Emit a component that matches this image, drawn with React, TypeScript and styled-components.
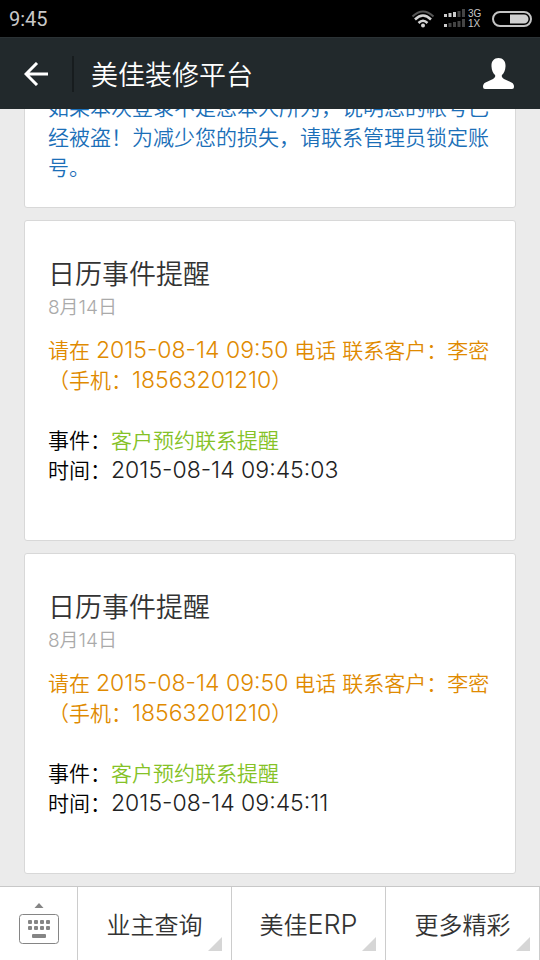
import React from "react";
import styled, { createGlobalStyle } from "styled-components";

const GlobalStyle = createGlobalStyle`
  *, *::before, *::after { box-sizing: border-box; }
  body {
    margin: 0;
    background: #ebebeb;
    font-family: Inter, "Noto Sans CJK SC", sans-serif;
    font-weight: 350;
  }
  button {
    margin: 0;
    padding: 0;
    border: 0;
    background: none;
    color: inherit;
    font: inherit;
    cursor: pointer;
  }
  h1, h2, p { margin: 0; font-weight: inherit; }
  svg { display: block; }
`;

const Screen = styled.div`
  display: flex;
  flex-direction: column;
  height: 100vh;
  overflow: hidden;
`;

const StatusBar = styled.div`
  flex: none;
  display: flex;
  align-items: center;
  height: 37px;
  padding: 0 8px 0 9px;
  background: #000;
  color: #c8c8c8;
`;

const Clock = styled.time`
  flex: 1;
  font-family: Roboto, sans-serif;
  font-size: 20px;
  font-weight: 400;
  line-height: 24px;
`;

const StatusIcons = styled.div`
  display: flex;
  align-items: center;
  gap: 9px;
`;

const Signal = styled.div`
  display: flex;
  align-items: center;
  gap: 3px;
`;

const Networks = styled.div`
  display: flex;
  flex-direction: column;
  width: 15px;
  font-family: "Liberation Sans", sans-serif;
  font-size: 10px;
  font-weight: 400;
  line-height: 10px;
`;

const Header = styled.header`
  flex: none;
  display: flex;
  align-items: center;
  height: 72px;
  padding-right: 26px;
  background: #22292c;
  border-top: 1px solid #2b3235;
  color: #fff;
`;

const BackButton = styled.button`
  display: flex;
  align-items: center;
  justify-content: center;
  width: 72px;
  height: 100%;
`;

const HeaderRule = styled.span`
  width: 2px;
  height: 36px;
  background: #171c1e;
`;

const HeaderTitle = styled.h1`
  flex: 1;
  padding: 4px 0 0 17px;
  font-size: 27px;
  line-height: 36px;
`;

const Messages = styled.main`
  flex: 1;
  min-height: 0;
  display: flex;
  flex-direction: column;
  justify-content: flex-end;
  gap: 12px;
  padding: 0 24px 12px;
  overflow: hidden;
`;

const Card = styled.article`
  flex: none;
  padding: 36px 23px 24px;
  background: #fff;
  border: 1px solid #d8d8d8;
  border-radius: 3px;
`;

const CardTitle = styled.h2`
  color: #333;
  font-size: 27px;
  line-height: 36px;
`;

const CardDate = styled.time`
  display: block;
  margin: 5px 0 18px;
  color: #aaa;
  font-size: 19px;
  line-height: 20px;
`;

const Line = styled.p<{ $color?: string }>`
  min-height: 30px;
  color: ${({ $color }) => $color ?? "#000"};
  font-size: 21px;
  line-height: 30px;
`;

const Value = styled.span<{ $color: string }>`
  color: ${({ $color }) => $color};
`;

const Figures = styled.span<{ $color?: string }>`
  color: ${({ $color }) => $color ?? "inherit"};
  font-size: 23px;
  line-height: 1;
`;

const Menu = styled.nav`
  flex: none;
  display: flex;
  height: 74px;
  background: #fff;
  border-top: 1px solid #c8c8c8;
`;

const KeyboardButton = styled.button`
  flex: none;
  display: flex;
  justify-content: center;
  width: 78px;
  padding-top: 16px;
  border-right: 1px solid #ccc;
`;

const MenuButton = styled.button`
  position: relative;
  flex: 1;
  padding-top: 4px;
  border-right: 1px solid #ccc;
  color: #333;
  font-size: 24px;
  line-height: 32px;

  &::after {
    content: "";
    position: absolute;
    right: 9px;
    bottom: 9px;
    width: 14px;
    height: 14px;
    background: #d6d6d6;
    clip-path: polygon(100% 0, 100% 100%, 0 100%);
  }
`;

const Latin = styled.span`
  font-size: 27px;
  line-height: 1;
`;

const WifiIcon = () => (
  <svg width="24" height="18" viewBox="0 0 24 18" fill="none" strokeWidth="2" aria-hidden="true">
    <path d="M1.5 6.5Q12-3.5 22.5 6.5" stroke="#555" />
    <path d="M4 9.5Q12 1.5 20 9.5" stroke="#d4d4d4" strokeWidth="2.5" />
    <path d="M7.500 13Q12 8.500 16.500 13" stroke="#d4d4d4" strokeWidth="2.5" />
    <circle cx="12" cy="15.500" r="2" fill="#d4d4d4" />
  </svg>
);

const BARS = [
  { x: 0, height: 3 },
  { x: 4.5, height: 4 },
  { x: 9, height: 5 },
  { x: 13.5, height: 6 },
  { x: 18, height: 8 },
];

const SignalRow = ({ y, active }: { y: number; active: number }) => (
  <>
    {BARS.map(({ x, height }, i) => (
      <rect key={x} x={x} y={y - height} width="3" height={height} fill={i < active ? "#ccc" : "#444"} />
    ))}
  </>
);

const SignalIcon = () => (
  <svg width="21" height="20" viewBox="0 0 21 20" aria-hidden="true">
    <SignalRow y={8} active={3} />
    <SignalRow y={18} active={1} />
  </svg>
);

const BatteryIcon = () => (
  <svg width="40" height="16" viewBox="0 0 40 16" aria-hidden="true">
    <rect x="1" y="1" width="38" height="14" rx="7" fill="none" stroke="#c4c4c4" strokeWidth="2" />
    <path d="M18 3.500H32a4.500 4.500 0 0 1 0 9H18Z" fill="#d0d0d0" />
  </svg>
);

const BackIcon = () => (
  <svg width="24" height="24" viewBox="0 0 24 24" fill="none" stroke="#fff" strokeWidth="3" aria-hidden="true">
    <path d="M13 1L2 12L13 23M2.500 12H24" />
  </svg>
);

const PersonIcon = () => (
  <svg width="31" height="31" viewBox="0 0 31 31" fill="#fff" aria-hidden="true">
    <path d="M15.500 0C20.300 0 22.800 3.500 22.500 8.500C22.300 12.500 21 15 19 17C18.300 18.700 19.200 20 21 21L28.500 24.500C30.500 25.500 31 27 31 29Q31 31 29 31H2Q0 31 0 29C0 27 .500 25.500 2.500 24.500L10 21C11.800 20 12.700 18.700 12 17C10 15 8.700 12.500 8.500 8.500C8.200 3.500 10.700 0 15.500 0Z" />
  </svg>
);

const KEYS = [9, 15, 21, 27];

const KeyboardIcon = () => (
  <svg width="40" height="41" viewBox="0 0 40 41" fill="#858585" aria-hidden="true">
    <path d="M20 0L24.500 5H15.500Z" />
    <rect x="0.500" y="11.500" width="39" height="29" rx="3" fill="none" stroke="#858585" />
    {KEYS.map((x) => (
      <React.Fragment key={x}>
        <rect x={x} y="17" width="4" height="4" rx="1" />
        <rect x={x} y="23" width="4" height="4" rx="1" />
      </React.Fragment>
    ))}
    <rect x="13" y="31" width="14" height="4" rx="1" />
  </svg>
);

const EVENTS = [
  { id: 1, time: "2015-08-14 09:45:03" },
  { id: 2, time: "2015-08-14 09:45:11" },
];

const MENU = [
  { id: "query", label: "业主查询" },
  { id: "erp", label: "美佳", latin: "ERP" },
  { id: "more", label: "更多精彩" },
];

const EventCard = ({ time }: { time: string }) => (
  <Card>
    <CardTitle>日历事件提醒</CardTitle>
    <CardDate dateTime="2015-08-14">8月14日</CardDate>
    <Line $color="#e08a00">
      请在 <Figures>2015-08-14 09:50</Figures> 电话 联系客户：李密
      <br />
      （手机：<Figures>18563201210</Figures>）
    </Line>
    <Line />
    <Line>
      事件：<Value $color="#85c226">客户预约联系提醒</Value>
    </Line>
    <Line>
      时间：<Figures $color="#222">{time}</Figures>
    </Line>
    <Line />
  </Card>
);

export default function App() {
  return (
    <>
      <GlobalStyle />
      <Screen>
        <StatusBar>
          <Clock>9:45</Clock>
          <StatusIcons>
            <WifiIcon />
            <Signal>
              <SignalIcon />
              <Networks>
                <span>3G</span>
                <span>1X</span>
              </Networks>
            </Signal>
            <BatteryIcon />
          </StatusIcons>
        </StatusBar>
        <Header>
          <BackButton aria-label="返回">
            <BackIcon />
          </BackButton>
          <HeaderRule />
          <HeaderTitle>美佳装修平台</HeaderTitle>
          <button aria-label="账号">
            <PersonIcon />
          </button>
        </Header>
        <Messages>
          <Card>
            <Line $color="#1b6fb8">
              如果本次登录不是您本人所为，说明您的帐号已经被盗！为减少您的损失，请联系管理员锁定账号。
            </Line>
          </Card>
          {EVENTS.map((event) => (
            <EventCard key={event.id} time={event.time} />
          ))}
        </Messages>
        <Menu>
          <KeyboardButton aria-label="键盘">
            <KeyboardIcon />
          </KeyboardButton>
          {MENU.map(({ id, label, latin }) => (
            <MenuButton key={id}>
              {label}
              {latin && <Latin>{latin}</Latin>}
            </MenuButton>
          ))}
        </Menu>
      </Screen>
    </>
  );
}
